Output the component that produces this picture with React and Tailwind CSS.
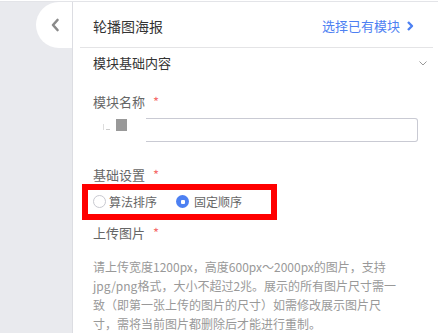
export default function App() {
  const font = { fontFamily: '"Noto Sans CJK SC", "Noto Sans", sans-serif' };
  return (
    <div className="w-[438px] h-[333px] overflow-hidden bg-[#e9eaee] relative" style={font}>
      <div className="h-[1px] bg-white" />
      <div className="h-[1px] bg-[#e3e4e8]" />
      <div className="flex h-[331px]">
        <div className="w-[72px] shrink-0 relative">
          <div className="absolute left-[36px] top-[0px] w-[36px] h-[46px] bg-white rounded-l-full flex items-center justify-center">
            <svg width="10" height="14" viewBox="0 0 10 14" className="ml-[1px]">
              <path d="M7.5 2 L3 7 L7.5 12" fill="none" stroke="#8a8a8a" strokeWidth="2.6" strokeLinecap="round" strokeLinejoin="round" />
            </svg>
          </div>
        </div>
        <div className="w-[1px] bg-[#dcdde2] shrink-0" />
        <div className="flex-1 bg-white flex flex-col">
          <div className="h-[46px] pt-[4px] flex items-center justify-between pl-[20px] pr-[24px]">
            <span className="text-[14px] leading-[20px] text-[#333]">轮播图海报</span>
            <span className="flex items-center text-[13px] leading-[20px] text-[#4d80f2]">
              选择已有模块
              <svg width="8" height="10" viewBox="0 0 8 10" className="ml-[6px]">
                <path d="M2 1 L6 5 L2 9" fill="none" stroke="#4d80f2" strokeWidth="2.4" strokeLinejoin="round" />
              </svg>
            </span>
          </div>
          <div className="h-[1px] bg-[#e4e4e6] ml-[7px] mr-[5px]" />
          <div className="h-[32px] flex items-center justify-between pl-[20px] pr-[11px]">
            <span className="text-[13px] leading-[20px] text-[#333]">模块基础内容</span>
            <svg width="8" height="5" viewBox="0 0 8 5">
              <path d="M0.5 0.5 L4 4 L7.5 0.5" fill="none" stroke="#999" strokeWidth="1" />
            </svg>
          </div>
          <div className="pl-[20px] mt-[13px] text-[13px] leading-[20px] text-[#666] flex">
            模块名称<span className="text-[#f56c6c] ml-[8px]">*</span>
          </div>
          <div className="mt-[6px] flex items-stretch h-[25px] pl-[20px]">
            <div className="w-[53px] relative">
              <div className="absolute left-[23px] top-[1px] w-[11px] h-[12px] bg-[#999]" />
              <div className="absolute left-[10px] top-[6px] w-[1px] h-[6px] bg-[#ddd]" />
              <div className="absolute left-[13px] top-[11px] w-[4px] h-[1px] bg-[#ccc]" />
            </div>
            <div className="w-[272px] border border-l-0 border-[#c9cad3] rounded-r-[3px]" />
          </div>
          <div className="pl-[20px] mt-[24px] text-[13px] leading-[18px] text-[#666] flex">
            基础设置<span className="text-[#f56c6c] ml-[8px]">*</span>
          </div>
          <div className="ml-[9px] w-[195px] h-[37px] border-[6px] border-[#ff0000] bg-white flex items-center pl-[5px]">
            <span className="w-[13px] h-[13px] rounded-full border border-[#c8c9d0]" />
            <span className="ml-[3px] text-[12px] leading-[16px] text-[#666]">算法排序</span>
            <span className="ml-[19px] w-[13px] h-[13px] rounded-full bg-[#4d80f2] flex items-center justify-center">
              <span className="w-[4px] h-[4px] bg-white rounded-[1px]" />
            </span>
            <span className="ml-[5px] text-[12px] leading-[16px] text-[#666]">固定顺序</span>
          </div>
          <div className="pl-[20px] mt-[4px] text-[13px] leading-[18px] text-[#666] flex">
            上传图片<span className="text-[#f56c6c] ml-[8px]">*</span>
          </div>
          <div className="pl-[20px] mt-[15px] text-[12px] leading-[19px] text-[#999] whitespace-nowrap">
            <div>请上传宽度1200px，高度600px～2000px的图片，支持</div>
            <div>jpg/png格式，大小不超过2兆。展示的所有图片尺寸需一</div>
            <div>致（即第一张上传的图片的尺寸）如需修改展示图片尺</div>
            <div>寸，需将当前图片都删除后才能进行重制。</div>
          </div>
        </div>
      </div>
    </div>
  );
}
